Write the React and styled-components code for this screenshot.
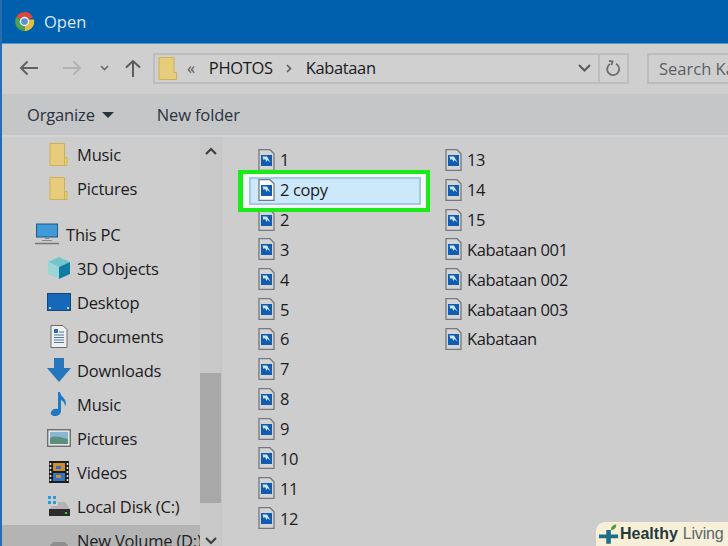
import React from 'react';
import styled, {createGlobalStyle} from 'styled-components';

const GlobalStyle = createGlobalStyle`
  html, body {
    margin: 0;
    padding: 0;
    background: #cdcdcd;
  }
  * {
    box-sizing: border-box;
  }
`;

const Page = styled.div`
  width: 728px;
  height: 546px;
  position: relative;
  overflow: hidden;
  display: flex;
  flex-direction: column;
  font-family: "Open Sans", "Noto Sans", sans-serif;
  font-size: 16.5px;
  color: #1c1c22;
  background: #cdcdcd;
  border-left: 2px solid #2a6cb0;
`;

const TitleBar = styled.div`
  height: 44px;
  margin-left: -2px;
  flex: none;
  display: flex;
  align-items: center;
  gap: 9px;
  padding: 0 0 0 14px;
  background: #0060ad;
  border-bottom: 1px solid #5b93c4;
  color: #dce8f3;
  font-size: 16.5px;
`;

const NavBar = styled.div`
  height: 50px;
  flex: none;
  display: flex;
  align-items: center;
  padding: 0 0 2px 17px;
  background: #cfcfcf;
`;

const NavIcon = styled.svg`
  flex: none;
  margin-right: ${p => p.$gap}px;
`;

const AddressBox = styled.div`
  width: 476px;
  height: 31px;
  flex: none;
  display: flex;
  align-items: center;
  margin-right: 18px;
  border: 2px solid #bdbdbd;
  background: #d0d0d0;
`;

const Crumb = styled.span`
  color: ${p => p.$muted ? '#55585c' : '#1a1a20'};
  margin: 0 ${p => p.$right}px 0 ${p => p.$left}px;
  letter-spacing: -0.35px;
  line-height: 1;
`;

const AddressSpacer = styled.div`
  flex: 1;
`;

const RefreshCell = styled.div`
  width: 29px;
  height: 100%;
  display: flex;
  align-items: center;
  justify-content: center;
  border-left: 2px solid #bdbdbd;
`;

const SearchBox = styled.div`
  flex: 1;
  height: 31px;
  display: flex;
  align-items: center;
  padding-left: 10px;
  border: 2px solid #bdbdbd;
  border-right: none;
  color: #5d5f62;
  white-space: nowrap;
  overflow: hidden;
`;

const Toolbar = styled.div`
  height: 43px;
  flex: none;
  display: flex;
  align-items: center;
  padding-left: 25px;
  background: #c5c6c7;
  border-bottom: 2px solid #d2d2d2;
  color: #2a3240;
  letter-spacing: -0.15px;
`;

const ToolButton = styled.div`
  display: flex;
  align-items: center;
  gap: 7px;
  margin-right: ${p => p.$gap || 0}px;
`;

const Caret = styled.span`
  width: 0;
  height: 0;
  border-left: 6px solid transparent;
  border-right: 6px solid transparent;
  border-top: 6px solid #2a3240;
`;

const Body = styled.div`
  flex: 1;
  min-height: 0;
  display: flex;
`;

const Sidebar = styled.div`
  width: 198px;
  flex: none;
  overflow: hidden;
  letter-spacing: -0.2px;
`;

const NavItem = styled.div`
  height: 34px;
  display: flex;
  align-items: center;
  gap: ${p => p.$pc ? 7 : 6}px;
  padding-left: ${p => p.$pc ? 32 : 44}px;
  padding-bottom: ${p => p.$active ? 4 : 0}px;
  margin-top: ${p => p.$pc ? 12 : p.$active ? 2 : 0}px;
  white-space: nowrap;
  background: ${p => p.$active ? '#b4b4b4' : 'transparent'};
`;

const IconSlot = styled.span`
  width: ${p => p.$w || 25}px;
  height: 26px;
  flex: none;
  display: flex;
  align-items: center;
  justify-content: center;
`;

const ScrollTrack = styled.div`
  width: 22px;
  flex: none;
  display: flex;
  flex-direction: column;
  align-items: center;
  background: #c9c9c9;
  border-right: 1px solid #c4c4c4;
`;

const ScrollArrow = styled.svg`
  flex: none;
  margin-top: ${p => p.$top}px;
`;

const ScrollThumb = styled.div`
  width: 21px;
  height: 130px;
  margin-top: 218px;
  background: #a8a8a8;
`;

const FileList = styled.div`
  flex: 1;
  display: grid;
  grid-template-columns: 187px 187px;
  grid-template-rows: repeat(13, 29.85px);
  grid-auto-flow: column;
  justify-content: start;
  padding: 8px 0 0 24px;
  letter-spacing: -0.4px;
`;

const FileRow = styled.div`
  display: flex;
  align-items: center;
  gap: 5px;
  padding-left: 12px;
  white-space: nowrap;
`;

// selected row: blue box in ::after, white and green marker frame in ::before
const SelectedRow = styled(FileRow)`
  position: relative;
  z-index: 1;
  margin: 2px 12px 0 3px;
  padding: 0 0 2px 9px;

  &::before {
    content: '';
    position: absolute;
    z-index: -1;
    top: -7px;
    left: -11px;
    right: -9px;
    bottom: -7px;
    background: #f4f9f4;
    border: 4px solid #18eb18;
    border-left-width: 5px;
  }

  &::after {
    content: '';
    position: absolute;
    z-index: -1;
    inset: 0;
    background: #cde8fb;
    border: 2px solid #9fcbe8;
  }
`;

const Badge = styled.div`
  position: absolute;
  right: 0;
  bottom: 0;
  width: 132px;
  height: 24px;
  display: flex;
  align-items: center;
  padding-left: 2px;
  background: #f7efd8;
  border-top-left-radius: 9px;
  font-family: "Liberation Sans", sans-serif;
  font-size: 16px;
  white-space: nowrap;
  color: #3a4a4c;
`;

const BadgeStrong = styled.b`
  color: #24393d;
`;

const BadgeLight = styled.span`
  margin-left: 5px;
  letter-spacing: -0.2px;
  color: #59686a;
`;

const FolderIcon = () => (
  <svg width="19" height="23" viewBox="0 0 19 23">
    <path d="M1 .5h14.5v14H18V22.500H1z" fill="#e6cc7c" stroke="#cfb24f" />
    <path d="M15.500 15v7.500" stroke="#cfb24f" />
  </svg>
);

const ImageFileIcon = ({light}) => (
  <svg width="17" height="22" viewBox="0 0 17 22">
    <path d="M1 .7h11l4 4V21.300H1z" fill={light ? '#fbfbfb' : '#d4d4d4'} stroke="#75797e" strokeWidth="1.300" />
    <rect x="3" y="6" width="11" height="11" fill="#0f5cb0" />
    <path d="M4.500 7.500h4.500l3.500 6-3-2.500-.8 2-1.700-3-1.500 1z" fill="#cfe6f6" />
  </svg>
);

const PcIcon = () => (
  <svg width="24" height="22" viewBox="0 0 24 22">
    <rect x="1.500" y="1" width="21" height="13" fill="#3f9ad8" stroke="#23577f" />
    <path d="M10 14h4v2h-4zM7 17h10v1H7z" fill="#7d8a92" />
    <path d="M0 20.500h24" stroke="#777" strokeWidth="1.500" />
  </svg>
);

const CubeIcon = () => (
  <svg width="24" height="24" viewBox="0 0 24 24">
    <path d="M12 1l11 5-11 5L1 6z" fill="#72c5cc" />
    <path d="M1 6l11 5v12L1 18z" fill="#9cd5d6" />
    <path d="M23 6l-11 5v12l11-5z" fill="#0d7da3" />
  </svg>
);

const DesktopIcon = () => (
  <svg width="24" height="18" viewBox="0 0 24 18">
    <rect x=".5" y=".5" width="23" height="17" fill="#1569b8" stroke="#17466f" />
    <path d="M2 15h2M20 15h2" stroke="#e8f2fa" strokeWidth="1.500" />
  </svg>
);

const DocIcon = () => (
  <svg width="18" height="23" viewBox="0 0 18 23">
    <path d="M1 .5h12l4 4V22.500H1z" fill="#efefef" stroke="#6b6b6b" />
    <path d="M4 4h4v4H4z" fill="#2c6cae" />
    <path d="M9 7h5M4 10h10M4 12.500h10M4 15h10M4 17.500h10" stroke="#4c7ba6" />
  </svg>
);

const DownloadIcon = () => (
  <svg width="24" height="24" viewBox="0 0 24 24">
    <path d="M7 0h10v10h7L12 24 0 10h7z" fill="#2476bd" />
  </svg>
);

const MusicIcon = () => (
  <svg width="17" height="24" viewBox="0 0 17 24">
    <path d="M8 0h2c1 5 6 6 6 12l-1 2c0-3-2-5-4-6v11c0 3-3 5-6 5-3 0-5-2-4-4 1-3 4-4 7-3z" fill="#2079c4" />
  </svg>
);

const PictureIcon = () => (
  <svg width="24" height="18" viewBox="0 0 24 18">
    <rect x=".7" y=".7" width="22.600" height="16.600" fill="#e4e4e4" stroke="#6f6f6f" strokeWidth="1.400" />
    <rect x="3" y="3" width="18" height="12" fill="#88b8d4" />
    <path d="M3 9c5-3 9-1 18 1v5H3z" fill="#5d8f7d" />
  </svg>
);

const VideoIcon = () => (
  <svg width="20" height="22" viewBox="0 0 20 22">
    <rect width="20" height="22" fill="#1e1e1e" />
    <path d="M1.500 2v18M18.500 2v18" stroke="#eee" strokeWidth="1.500" strokeDasharray="2 2" />
    <rect x="4" y="2" width="12" height="8" fill="#d58a2a" />
    <rect x="4" y="12" width="12" height="8" fill="#2f74c8" />
    <path d="M7 5h5v3H7z" fill="#2f74c8" />
    <path d="M7 14h5v3H7z" fill="#d58a2a" />
  </svg>
);

const DiskIcon = () => (
  <svg width="24" height="22" viewBox="0 0 24 22">
    <path d="M1 1h3v3H1zM6 1h3v3H6zM1 6h3v3H1zM6 6h3v3H6z" fill="#2b9bd6" />
    <path d="M11 7h7l5 7H2l3-3h6z" fill="#b3b3b3" />
    <rect x="2" y="14" width="21" height="7" fill="#2c2c2c" />
    <rect x="18" y="17" width="2" height="2" fill="#46d04a" />
  </svg>
);

const VolumeIcon = () => (
  <svg width="24" height="22" viewBox="0 0 24 22">
    <path d="M6 13h12l5 6H1z" fill="#8e8e8e" />
    <rect x="1" y="19" width="22" height="3" fill="#333" />
  </svg>
);

const ChromeIcon = () => (
  <svg width="21" height="21" viewBox="0 0 20 20">
    <path d="M10 10L2 6a9 9 0 0 1 16 0z" fill="#d9483b" />
    <path d="M10 10h9a9 9 0 0 1-9 9z" fill="#e8bd3a" />
    <path d="M10 10v9A9 9 0 0 1 2 6z" fill="#4aa255" />
    <path d="M10 1a9 9 0 0 1 8 5h-8z" fill="#d9483b" />
    <path d="M14 8h5a9 9 0 0 1-9 11z" fill="#e8bd3a" />
    <circle cx="10" cy="10" r="4.500" fill="#eef3f7" />
    <circle cx="10" cy="10" r="3.200" fill="#5a92d8" />
  </svg>
);

const SIDE_ITEMS = [
  {label: 'Music', icon: <FolderIcon />},
  {label: 'Pictures', icon: <FolderIcon />},
  {label: 'This PC', icon: <PcIcon />, pc: true},
  {label: '3D Objects', icon: <CubeIcon />},
  {label: 'Desktop', icon: <DesktopIcon />},
  {label: 'Documents', icon: <DocIcon />},
  {label: 'Downloads', icon: <DownloadIcon />},
  {label: 'Music', icon: <MusicIcon />},
  {label: 'Pictures', icon: <PictureIcon />},
  {label: 'Videos', icon: <VideoIcon />},
  {label: 'Local Disk (C:)', icon: <DiskIcon />},
  {label: 'New Volume (D:)', icon: <VolumeIcon />, active: true},
];

const FILES = [
  '1', '2 copy', '2', '3', '4', '5', '6', '7', '8', '9', '10', '11', '12',
  '13', '14', '15', 'Kabataan 001', 'Kabataan 002', 'Kabataan 003', 'Kabataan',
];

const App = () => {
  return (
    <Page>
      <GlobalStyle />
      <TitleBar>
        <ChromeIcon />
        <span>Open</span>
      </TitleBar>

      <NavBar>
        <NavIcon $gap={23} width="20" height="16" viewBox="0 0 20 16" fill="none" stroke="#5f6163" strokeWidth="2">
          <path d="M19 8H2M8.500 1.500L2 8l6.500 6.500" />
        </NavIcon>
        <NavIcon $gap={18} width="20" height="16" viewBox="0 0 20 16" fill="none" stroke="#b1b2b3" strokeWidth="2">
          <path d="M1 8h17M11.500 1.500L18 8l-6.500 6.500" />
        </NavIcon>
        <NavIcon $gap={15} width="9" height="6" viewBox="0 0 9 6" fill="none" stroke="#6b6b6b" strokeWidth="1.600">
          <path d="M1 1l3.500 3.500L8 1" />
        </NavIcon>
        <NavIcon $gap={11} width="18" height="18" viewBox="0 0 18 18" fill="none" stroke="#5a5c5e" strokeWidth="2">
          <path d="M9 18V2M2 8.500L9 2l7 6.500" />
        </NavIcon>

        <AddressBox>
          <IconSlot $w={24}>
            <svg width="19" height="23" viewBox="0 0 19 23">
              <path d="M1 .5h15v15h2.500v7H1z" fill="#e6cc7c" stroke="#cfb24f" />
            </svg>
          </IconSlot>
          <Crumb $muted $left={8} $right={14}>«</Crumb>
          <Crumb $left={0} $right={13}>PHOTOS</Crumb>
          <NavIcon $gap={0} width="6" height="9" viewBox="0 0 6 9" fill="none" stroke="#55585c" strokeWidth="1.500">
            <path d="M1 1l3.500 3.500L1 8" />
          </NavIcon>
          <Crumb $left={14} $right={0}>Kabataan</Crumb>
          <AddressSpacer />
          <NavIcon $gap={7} width="13" height="8" viewBox="0 0 13 8" fill="none" stroke="#55585c" strokeWidth="2">
            <path d="M1 1l5.500 5.500L12 1" />
          </NavIcon>
          <RefreshCell>
            <svg width="15" height="17" viewBox="0 0 15 17" fill="none" stroke="#6b6d6f" strokeWidth="1.800">
              <path d="M10 3.800A6 6 0 1 1 4 4M3 .8L6.500 1.500 5.500 5" />
            </svg>
          </RefreshCell>
        </AddressBox>
        <SearchBox>Search Kabataan</SearchBox>
      </NavBar>

      <Toolbar>
        <ToolButton $gap={43}>
          Organize
          <Caret />
        </ToolButton>
        <ToolButton>New folder</ToolButton>
      </Toolbar>

      <Body>
        <Sidebar>
          {SIDE_ITEMS.map ((item, index) => (
            <NavItem key={index} $pc={item.pc} $active={item.active}>
              <IconSlot>{item.icon}</IconSlot>
              {item.label}
            </NavItem>
          ))}
        </Sidebar>
        <ScrollTrack>
          <ScrollArrow $top={10} width="12" height="8" viewBox="0 0 12 8" fill="none" stroke="#3f3f3f" strokeWidth="2.200">
            <path d="M1 7l5-5 5 5" />
          </ScrollArrow>
          <ScrollThumb />
          <ScrollArrow $top={34} width="12" height="8" viewBox="0 0 12 8" fill="none" stroke="#3f3f3f" strokeWidth="2.200">
            <path d="M1 1l5 5 5-5" />
          </ScrollArrow>
        </ScrollTrack>
        <FileList>
          {FILES.map ((name, index) => {
            const Row = name === '2 copy' ? SelectedRow : FileRow;
            return (
              <Row key={index}>
                <ImageFileIcon light={name === '2 copy'} />
                {name}
              </Row>
            );
          })}
        </FileList>
      </Body>

      <Badge>
        <svg width="22" height="22" viewBox="0 0 24 23">
          <path d="M9 7h5v5h8v4h-8v6H9v-6H1v-4h8z" fill="#1d6f88" />
          <path d="M14 7c0-4 3-6 6-6 0 4-2 6-6 6z" fill="#5c9a3c" />
        </svg>
        <BadgeStrong>Healthy</BadgeStrong>
        <BadgeLight>Living</BadgeLight>
      </Badge>
    </Page>
  );
};

export default App;
